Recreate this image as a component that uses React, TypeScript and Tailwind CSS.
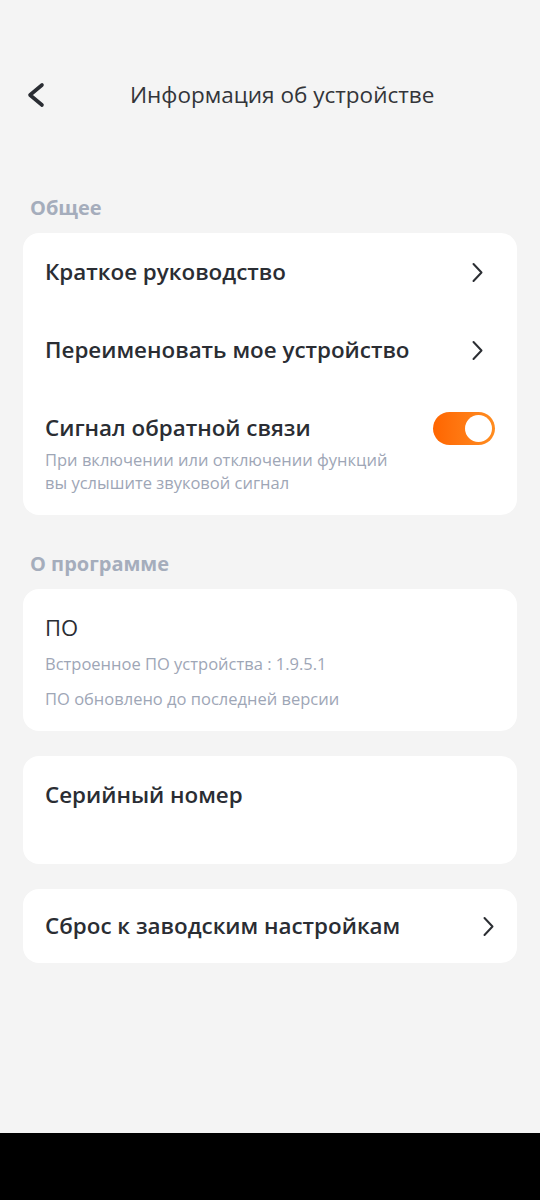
import React from "react";

function ChevronRight({ className = "" }: { className?: string }) {
  return (
    <svg width="13" height="21" viewBox="0 0 13 21" className={className} fill="none">
      <polyline points="2.5,2 10.5,10.5 2.5,19" stroke="#2b2e33" strokeWidth="2" strokeLinecap="round" strokeLinejoin="round" />
    </svg>
  );
}

function Toggle() {
  return (
    <div className="w-[62px] h-[33px] rounded-full bg-gradient-to-r from-[#ff6500] to-[#ff8c1f] flex items-center justify-end pr-[3px] shrink-0">
      <div className="w-[27px] h-[27px] rounded-full bg-white" />
    </div>
  );
}

export default function App() {
  return (
    <div className="w-[540px] h-[1200px] bg-[#f4f4f4] flex flex-col font-['Open_Sans',sans-serif] text-[#2a2d33]">
      <div className="flex-1 flex flex-col">
        <div className="mt-[67px] h-[56px] flex items-center relative">
          <div className="pl-[26px] w-[130px] flex items-center">
            <svg width="20" height="26" viewBox="0 0 20 26" fill="none">
              <polyline points="16,3 4,13 16,23" stroke="#2a2d33" strokeWidth="3.6" strokeLinecap="round" strokeLinejoin="round" />
            </svg>
          </div>
          <div className="text-[22.5px] leading-[30px] text-[#333539]">Информация об устройстве</div>
        </div>

        <div className="mt-[73px] mb-[13px] pl-[30px] text-[20px] leading-[24px] font-bold text-[#a5adbc]">Общее</div>
        <div className="mx-[23px] bg-white rounded-[16px] flex flex-col">
          <div className="h-[78px] flex items-center justify-between pl-[22px] pr-[33px]">
            <span className="text-[22.4px] leading-[28px] font-semibold">Краткое руководство</span>
            <ChevronRight />
          </div>
          <div className="h-[78px] flex items-center justify-between pl-[22px] pr-[33px]">
            <span className="text-[22.4px] leading-[28px] font-semibold">Переименовать мое устройство</span>
            <ChevronRight />
          </div>
          <div className="pt-[25px] pb-[21px] pl-[22px] pr-[22px]">
            <div className="flex items-center justify-between h-[28px]">
              <span className="text-[22.4px] leading-[28px] font-semibold">Сигнал обратной связи</span>
              <Toggle />
            </div>
            <div className="mt-[6px] text-[16.5px] leading-[23px] text-[#9ea6b6]">
              При включении или отключении функций
              <br />
              вы услышите звуковой сигнал
            </div>
          </div>
        </div>

        <div className="mt-[37px] mb-[13px] pl-[30px] text-[20px] leading-[24px] font-bold text-[#a5adbc]">О программе</div>
        <div className="mx-[23px] bg-white rounded-[16px] pt-[24px] pb-[20px] px-[22px]">
          <div className="text-[22px] leading-[28px] font-medium">ПО</div>
          <div className="mt-[11px] text-[16.5px] leading-[24px] text-[#9ea6b6]">Встроенное ПО устройства : 1.9.5.1</div>
          <div className="mt-[11px] text-[16.5px] leading-[24px] text-[#9ea6b6]">ПО обновлено до последней версии</div>
        </div>

        <div className="mt-[25px] mx-[23px] bg-white rounded-[16px] h-[108px] pt-[25px] px-[22px]">
          <div className="text-[22.4px] leading-[28px] font-semibold">Серийный номер</div>
        </div>

        <div className="mt-[25px] mx-[23px] bg-white rounded-[16px] h-[74px] flex items-center justify-between pl-[22px] pr-[22px]">
          <span className="text-[22.4px] leading-[28px] font-semibold">Сброс к заводским настройкам</span>
          <ChevronRight />
        </div>
      </div>
      <div className="h-[67px] bg-black shrink-0" />
    </div>
  );
}
